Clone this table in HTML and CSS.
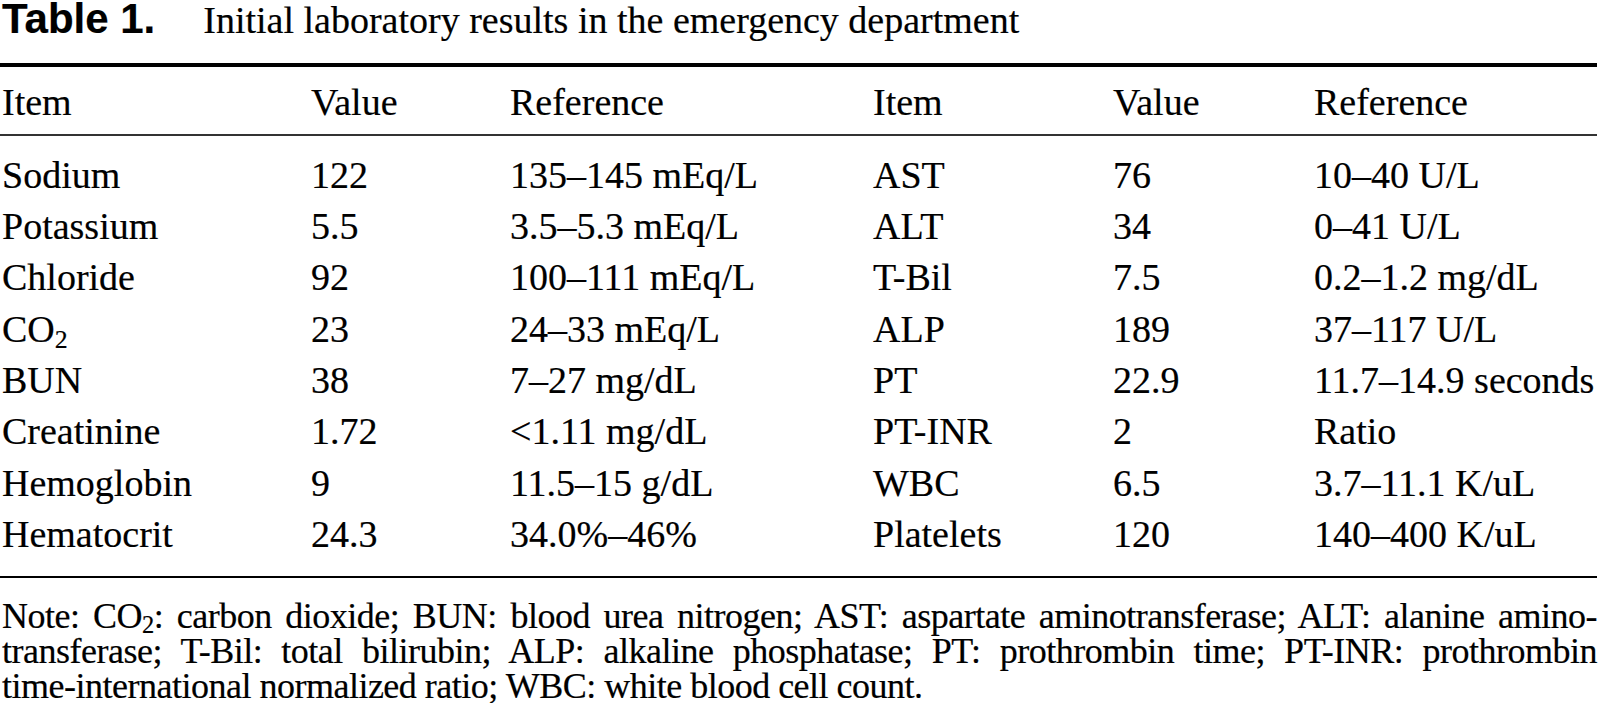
FILE: index.html
```html
<!DOCTYPE html>
<html lang="en">
<head>
<meta charset="utf-8">
<title>Table 1</title>
<link rel="stylesheet" href="styles.css">
</head>
<body>
<div class="page">
  <div class="caption"><span class="label">Table 1.</span><span class="title">Initial laboratory results in the emergency department</span></div>
  <div class="rule-thick"></div>
  <div class="row head">
    <div>Item</div><div>Value</div><div>Reference</div><div>Item</div><div>Value</div><div>Reference</div>
  </div>
  <div class="rule-thin"></div>
  <div class="body">
    <div class="row"><div>Sodium</div><div>122</div><div>135–145 mEq/L</div><div>AST</div><div>76</div><div>10–40 U/L</div></div>
    <div class="row"><div>Potassium</div><div>5.5</div><div>3.5–5.3 mEq/L</div><div>ALT</div><div>34</div><div>0–41 U/L</div></div>
    <div class="row"><div>Chloride</div><div>92</div><div>100–111 mEq/L</div><div>T-Bil</div><div>7.5</div><div>0.2–1.2 mg/dL</div></div>
    <div class="row"><div>CO<sub class="sub">2</sub></div><div>23</div><div>24–33 mEq/L</div><div>ALP</div><div>189</div><div>37–117 U/L</div></div>
    <div class="row"><div>BUN</div><div>38</div><div>7–27 mg/dL</div><div>PT</div><div>22.9</div><div>11.7–14.9 seconds</div></div>
    <div class="row"><div>Creatinine</div><div>1.72</div><div>&lt;1.11 mg/dL</div><div>PT-INR</div><div>2</div><div>Ratio</div></div>
    <div class="row"><div>Hemoglobin</div><div>9</div><div>11.5–15 g/dL</div><div>WBC</div><div>6.5</div><div>3.7–11.1 K/uL</div></div>
    <div class="row"><div>Hematocrit</div><div>24.3</div><div>34.0%–46%</div><div>Platelets</div><div>120</div><div>140–400 K/uL</div></div>
  </div>
  <div class="rule-bottom"></div>
  <div class="note">
    <div class="line just">Note: CO<sub class="sub">2</sub>: carbon dioxide; BUN: blood urea nitrogen; AST: aspartate aminotransferase; ALT: alanine amino-</div>
    <div class="line just">transferase; T-Bil: total bilirubin; ALP: alkaline phosphatase; PT: prothrombin time; PT-INR: prothrombin</div>
    <div class="line">time-international normalized ratio; WBC: white blood cell count.</div>
  </div>
</div>
</body>
</html>
```

FILE: styles.css
```css
html, body {
  margin: 0;
  padding: 0;
  background: #ffffff;
}
.page {
  width: 1597px;
  color: #000000;
  font-family: "Liberation Serif", "Times New Roman", serif;
  font-size: 38px;
  -webkit-text-stroke: 0.2px #000000;
}
.caption {
  height: 63px;
  padding-top: 0;
  line-height: 38px;
  padding-left: 2px;
  box-sizing: border-box;
  white-space: nowrap;
}
.label {
  font-family: "Liberation Sans", Arial, sans-serif;
  font-weight: bold;
  font-size: 42px;
  margin-right: 48px;
}
.title {
  font-size: 38px;
}
.rule-thick {
  height: 4px;
  background: #000000;
}
.rule-thin {
  height: 2px;
  background: #333333;
}
.rule-bottom {
  height: 2px;
  background: #000000;
}
.row {
  display: grid;
  grid-template-columns: 309px 199px 363px 240px 201px 1fr;
  padding-left: 2px;
  height: 51.3px;
  line-height: 51.3px;
  white-space: nowrap;
}
.head {
  margin-top: 9.5px;
  margin-bottom: 6px;
}
.body {
  padding-top: 14px;
  padding-bottom: 16px;
}
.sub {
  font-size: 0.68em;
  vertical-align: -0.22em;
  line-height: 0;
}
.note {
  padding-top: 21px;
  font-size: 36px;
  letter-spacing: -0.5px;
}
.note .line {
  line-height: 34.7px;
  height: 34.7px;
  white-space: nowrap;
  padding-left: 2px;
}
.note .just {
  text-align: justify;
  text-align-last: justify;
}
```
